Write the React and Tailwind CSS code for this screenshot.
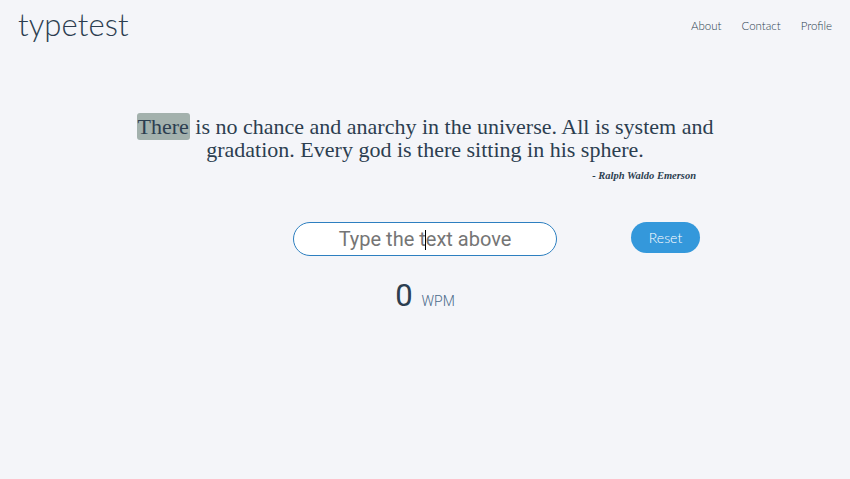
import React from "react";

function Nav() {
  return (
    <header className="flex items-center justify-between pl-[18px] pr-[18px] h-[50px]">
      <div className="text-[31px] font-light text-[#2c3e50] leading-none -mt-[2px] tracking-[0.1px]" style={{fontFamily: "Lato, sans-serif"}}>typetest</div>
      <nav className="flex gap-[20px] mt-[2px] text-[11.5px] font-light text-[#2c3e50]" style={{fontFamily: "Lato, sans-serif"}}>
        <a href="#">About</a>
        <a href="#">Contact</a>
        <a href="#">Profile</a>
      </nav>
    </header>
  );
}

export default function App() {
  return (
    <div className="min-h-[479px] bg-[#f4f5f9] text-[#2c3e50]">
      <Nav />

      <div className="mt-[65px] mx-auto w-[620px] text-center text-[22px] leading-[23px]" style={{fontFamily: "'Liberation Serif', serif"}}>
        <span className="bg-[#a3b1ad] rounded-[3px] py-[1px] px-[1px]">There</span> is no chance and anarchy in the universe. All is system and<br />
        gradation. Every god is there sitting in his sphere.
      </div>
      <div className="mx-auto w-[542px] text-right mt-[8px] text-[10.5px] leading-[13px] italic font-bold" style={{fontFamily: "'Liberation Serif', serif"}}>
        - Ralph Waldo Emerson
      </div>

      <div className="flex justify-center items-start mt-[40px]">
        <div className="w-[143px]"></div>
        <div className="relative w-[264px]">
          <input
            type="text"
            placeholder="Type the text above"
            className="w-full h-[34px] rounded-full border border-[#2d7fc0] bg-white text-center text-[20px] outline-none placeholder:text-[#757575]"
            style={{fontFamily: "Roboto, sans-serif"}}
          />
          <span className="absolute left-[132px] top-[8px] w-px h-[20px] bg-black"></span>
        </div>
        <button className="ml-[74px] w-[69px] h-[31px] rounded-full bg-[#3498db] text-white text-[14px] font-light" style={{fontFamily: "Lato, sans-serif"}}>
          Reset
        </button>
      </div>

      <div className="flex justify-center items-baseline mt-[24px] gap-[9px]" style={{fontFamily: "Roboto, sans-serif"}}>
        <span className="text-[31px] leading-none">0</span>
        <span className="text-[14px] font-light text-[#4a6a8a]">WPM</span>
      </div>
    </div>
  );
}
